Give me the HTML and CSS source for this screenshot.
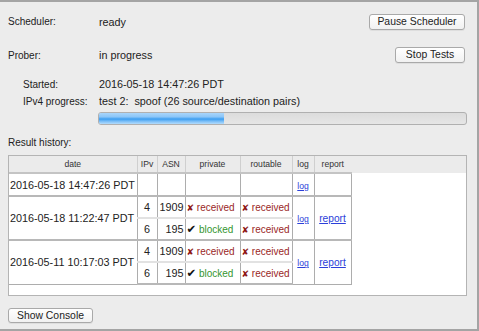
FILE: index.html
```html
<!DOCTYPE html>
<html lang="en">
<head>
<meta charset="UTF-8" />
<title>Spoofer</title>
<link rel="stylesheet" href="styles.css">
</head>
<body>
<div class="window">

<div class="status-row first">
<span class="label">Scheduler:</span>
<span class="value">ready</span>
<button class="btn pause">Pause Scheduler</button>
</div>

<div class="status-row prober">
<span class="label">Prober:</span>
<span class="value">in progress</span>
<button class="btn stop">Stop Tests</button>
</div>

<div class="status-row sub started">
<span class="label">Started:</span>
<span class="value">2016-05-18 14:47:26 PDT</span>
</div>

<div class="status-row sub">
<span class="label">IPv4 progress:</span>
<span class="value">test 2:&nbsp; spoof (26 source/destination pairs)</span>
</div>

<div class="progress"><div class="progress-fill" style="width: 34%;"></div></div>

<div class="section-title">Result history:</div>

<div class="history">
<table>
<colgroup>
<col class="c-date">
<col class="c-ipv">
<col class="c-asn">
<col class="c-res">
<col class="c-res2">
<col class="c-log">
<col class="c-rep">
</colgroup>
<thead>
<tr>
<th>date</th>
<th>IPv</th>
<th>ASN</th>
<th>private</th>
<th>routable</th>
<th>log</th>
<th>report</th>
</tr>
</thead>
<tbody>
<tr class="run single">
<td class="date">2016-05-18 14:47:26 PDT</td>
<td></td>
<td></td>
<td></td>
<td></td>
<td class="log"><a href="#">log</a></td>
<td></td>
</tr>
<tr class="run">
<td class="date" rowspan="2">2016-05-18 11:22:47 PDT</td>
<td class="ipv">4</td>
<td class="asn">1909</td>
<td class="bad"><span class="x">✘</span> received</td>
<td class="bad"><span class="x">✘</span> received</td>
<td class="log" rowspan="2"><a href="#">log</a></td>
<td class="rep" rowspan="2"><a href="#">report</a></td>
</tr>
<tr class="sub-run">
<td class="ipv">6</td>
<td class="asn">195</td>
<td class="good"><span class="ok">✔</span> blocked</td>
<td class="bad"><span class="x">✘</span> received</td>
</tr>
<tr class="run">
<td class="date" rowspan="2">2016-05-11 10:17:03 PDT</td>
<td class="ipv">4</td>
<td class="asn">1909</td>
<td class="bad"><span class="x">✘</span> received</td>
<td class="bad"><span class="x">✘</span> received</td>
<td class="log" rowspan="2"><a href="#">log</a></td>
<td class="rep" rowspan="2"><a href="#">report</a></td>
</tr>
<tr class="sub-run last">
<td class="ipv">6</td>
<td class="asn">195</td>
<td class="good"><span class="ok">✔</span> blocked</td>
<td class="bad"><span class="x">✘</span> received</td>
</tr>
</tbody>
</table>
</div>

<button class="btn console">Show Console</button>

</div>
</body>
</html>
```

FILE: styles.css
```css
* {
box-sizing: border-box;
}

body {
margin: 0;
background-color: #fff;
font-family: 'Liberation Sans', Arial, sans-serif;
color: #222;
}

.window {
width: 479px;
height: 331px;
background-color: #ececec;
border-top: 2px solid #a4a4a4;
border-right: 2px solid #a4a4a4;
border-bottom: 2px solid #a4a4a4;
padding: 0 10px 0 8px;
display: flex;
flex-direction: column;
}

.status-row {
display: flex;
align-items: center;
height: 17px;
font-size: 10.8px;
}

.status-row.first {
margin-top: 11px;
}

.status-row.prober {
margin-top: 17px;
height: 16px;
}

.status-row.started {
margin-top: 13px;
}

.status-row.sub {
height: 16px;
padding-left: 15px;
}

.status-row.sub + .status-row.sub {
margin-top: 1px;
}

.label {
width: 91px;
flex-shrink: 0;
font-size: 10px;
}

.status-row.sub .label {
width: 76px;
}

.value {
flex: 1;
}

.btn {
font-family: 'Liberation Sans', Arial, sans-serif;
font-size: 10.4px;
color: #222;
height: 16px;
padding: 0;
white-space: nowrap;
background: linear-gradient(#ffffff, #f1f1f1);
border: 1px solid #a9a9a9;
border-radius: 3px;
box-shadow: 0 1px 0 rgba(0, 0, 0, 0.06);
line-height: 14px;
}

.pause {
width: 96px;
margin-right: 2px;
}

.stop {
width: 70px;
margin-right: 2px;
}

.progress {
margin-left: 90px;
margin-top: 3px;
height: 13px;
background: linear-gradient(#dcdcdc, #e6e6e6);
border: 1px solid #b0b0b0;
border-radius: 3px;
overflow: hidden;
}

.progress-fill {
height: 100%;
background: linear-gradient(#a9d5fb 0%, #8cc6f8 35%, #3c9ef1 55%, #79bdf7 75%, #b4dcfc 100%);
}

.section-title {
margin-top: 10px;
height: 16px;
line-height: 16px;
font-size: 10px;
}

.history {
margin-top: 4px;
height: 141px;
background: linear-gradient(#ebebeb 0, #ebebeb 17px, #fff 17px);
border: 1px solid #b4b4b4;
}

table {
border-collapse: collapse;
table-layout: fixed;
width: 342px;
font-size: 10.8px;
}

th {
height: 17px;
font-weight: normal;
font-size: 8.6px;
color: #333;
border-left: 1px solid #cfcfcf;
border-bottom: 2px solid #c4c4c4;
padding: 0;
text-align: center;
}

th:first-child {
border-left: none;
}

td {
border: 1px solid #adadad;
border-top: 2px solid #b8b8b8;
padding: 0 2px;
white-space: nowrap;
overflow: visible;
}

tr.run td {
height: 22px;
}

tr.single td {
height: 23px;
}

tr.sub-run td {
height: 22px;
border-top: 2px solid #e2e2e2;
}

tr.last td {
border-bottom: 2px solid #b8b8b8;
}

td:first-child {
border-left: none;
}

.c-date { width: 128px; }
.c-ipv { width: 20px; }
.c-asn { width: 28px; }
.c-res { width: 55px; }
.c-res2 { width: 52px; }
.c-log { width: 22px; }
.c-rep { width: 37px; }

.date {
font-size: 10.8px;
padding: 0 1px;
}

.ipv {
text-align: center;
}

.asn {
text-align: right;
padding-right: 1px;
padding-left: 0;
}

.bad {
color: #9a1f1f;
font-size: 10px;
padding: 0 1px;
}

.good {
color: #35962f;
font-size: 10px;
padding: 0 1px;
}

.x {
font-family: 'DejaVu Sans', sans-serif;
font-size: 9px;
color: #8e1515;
}

.ok {
font-family: 'DejaVu Sans', sans-serif;
font-size: 11.5px;
color: #111;
}

.log,
.rep {
text-align: center;
padding: 0;
}

.log a {
font-size: 8.6px;
color: #2b3fd9;
}

.rep a {
font-size: 10.2px;
color: #2b3fd9;
}

.console {
align-self: flex-start;
width: 85px;
margin-top: 12px;
height: 15px;
}
```
